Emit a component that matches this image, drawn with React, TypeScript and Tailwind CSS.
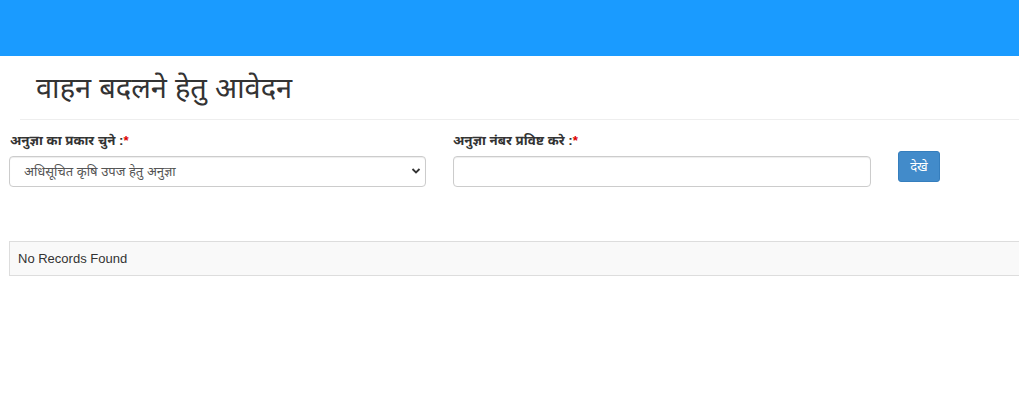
export default function App() {
  const font = { fontFamily: '"Liberation Sans", "Noto Sans Devanagari", "Noto Sans", sans-serif' };
  return (
    <div className="w-[1019px] h-[405px] bg-white text-[#333] overflow-hidden" style={font}>
      <div className="h-[56px] bg-[#1a9bff]" />
      <div className="ml-[20px] border-b border-[#eeeeee] h-[64px] pl-[16px] pt-[12px]">
        <h1 className="text-[29px] leading-[40px] text-[#333] font-normal">वाहन बदलने हेतु आवेदन</h1>
      </div>
      <div className="flex items-start pl-[9px] pt-[11px]">
        <div className="w-[417px]">
          <label className="block text-[13.3px] font-bold leading-[20px] pl-[1px]">
            अनुज्ञा का प्रकार चुने :<span className="text-[#dd0000]">*</span>
          </label>
          <div className="relative mt-[5px]">
            <select className="appearance-none w-full h-[31px] border border-[#cccccc] rounded-[4px] bg-white pl-[14px] pr-[28px] text-[13px] text-[#555] shadow-[inset_0_1px_1px_rgba(0,0,0,0.075)]">
              <option>अधिसूचित कृषि उपज हेतु अनुज्ञा</option>
            </select>
            <svg className="absolute right-[5px] top-[10px] pointer-events-none" width="10" height="10" viewBox="0 0 10 10">
              <path d="M1.5 3 L5 6.5 L8.5 3" fill="none" stroke="#333" strokeWidth="1.8" />
            </svg>
          </div>
        </div>
        <div className="w-[418px] ml-[27px]">
          <label className="block text-[13.3px] font-bold leading-[20px]">
            अनुज्ञा नंबर प्रविष्ट करे :<span className="text-[#dd0000]">*</span>
          </label>
          <input className="mt-[5px] block w-full h-[31px] border border-[#cccccc] rounded-[4px] bg-white px-[12px] text-[13px] shadow-[inset_0_1px_1px_rgba(0,0,0,0.075)]" />
        </div>
        <button className="ml-[27px] mt-[20px] w-[42px] h-[31px] bg-[#428bca] border border-[#357ebd] rounded-[3px] text-white text-[13px] leading-[20px]">
          देखे
        </button>
      </div>
      <div className="ml-[9px] mt-[54px] h-[35px] bg-[#f9f9f9] border border-[#dddddd] border-r-0 flex items-center pl-[8px] text-[13px] text-[#333]">
        No Records Found
      </div>
    </div>
  );
}
